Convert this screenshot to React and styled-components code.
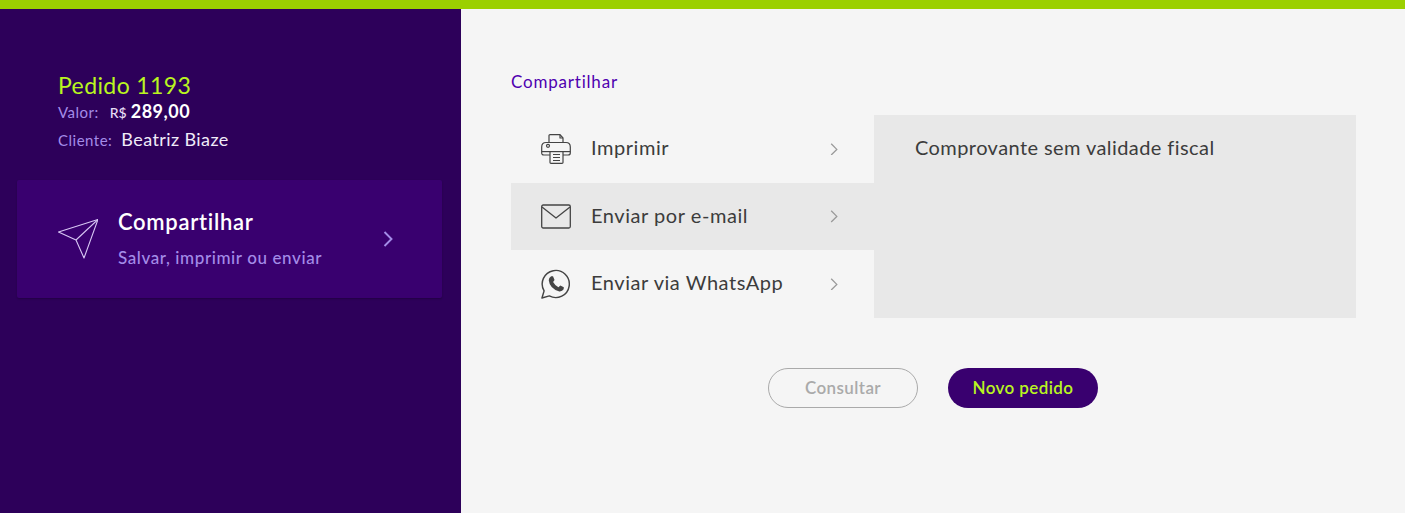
import React from 'react';
import styled, { createGlobalStyle } from 'styled-components';

const GlobalStyle = createGlobalStyle`
  html, body {
    margin: 0;
    height: 100%;
    background: #f5f5f5;
  }
  body {
    font-family: 'Lato', 'Open Sans', sans-serif;
  }
  * {
    box-sizing: border-box;
  }
`;

const Page = styled.div`
  width: 100%;
  height: 513px;
  overflow: hidden;
  display: flex;
  flex-direction: column;
`;

const TopBar = styled.div`
  flex: 0 0 9px;
  background: #9bd000;
`;

const Body = styled.div`
  flex: 1;
  display: flex;
`;

const Sidebar = styled.aside`
  flex: 0 0 461px;
  background: #2d005a;
  padding: 62px 19px 0 17px;
`;

const Summary = styled.div`
  padding-left: 41px;
  margin-bottom: 25px;
`;

const OrderTitle = styled.h1`
  margin: 0;
  font-size: 23px;
  line-height: 28px;
  font-weight: 400;
  letter-spacing: 0.4px;
  color: #baf51f;
`;

const SummaryRow = styled.div`
  display: flex;
  align-items: baseline;
  height: ${p => p.$height}px;
  line-height: ${p => p.$height}px;
`;

const SummaryLabel = styled.span`
  font-size: 15px;
  letter-spacing: 0.5px;
  color: #a48ce8;
  margin-right: ${p => p.$gap}px;
`;

const Currency = styled.span`
  font-size: 14px;
  font-weight: 500;
  color: #e6dcf5;
  margin-right: 4px;
`;

const Amount = styled.strong`
  font-size: 18px;
  font-weight: 700;
  letter-spacing: 0.5px;
  color: #ffffff;
`;

const ClientName = styled.span`
  font-size: 18px;
  letter-spacing: 0.4px;
  color: #f0ebf8;
`;

const ShareCard = styled.div`
  height: 118px;
  background: #39006f;
  border-radius: 2px;
  box-shadow: 0 1px 2px rgba(0, 0, 0, 0.25);
  display: flex;
  align-items: center;
  padding: 0 49px 0 41px;
`;

const ShareText = styled.div`
  flex: 1;
  margin-left: 20px;
  margin-top: -2px;
`;

const ShareTitle = styled.div`
  font-size: 22px;
  line-height: 28px;
  font-weight: 600;
  letter-spacing: 0.7px;
  color: #ffffff;
`;

const ShareSubtitle = styled.div`
  margin-top: 11px;
  font-size: 17px;
  line-height: 22px;
  font-weight: 500;
  letter-spacing: 0.6px;
  color: #a48ce8;
`;

const Main = styled.main`
  flex: 1;
  padding: 62px 49px 0 50px;
`;

const SectionTitle = styled.h2`
  margin: 0 0 23px;
  font-size: 17px;
  line-height: 21px;
  font-weight: 400;
  letter-spacing: 0.8px;
  color: #4f00b0;
`;

const Panels = styled.div`
  display: flex;
  height: 203px;
`;

const OptionList = styled.div`
  flex: 0 0 363px;
  display: flex;
  flex-direction: column;
`;

const Option = styled.div`
  height: ${p => p.$height}px;
  display: flex;
  align-items: center;
  padding: 0 36px 0 30px;
  background: ${p => (p.$active ? '#e8e8e8' : 'transparent')};
`;

const OptionIcon = styled.span`
  flex: 0 0 30px;
  height: 32px;
  display: flex;
  align-items: center;
  justify-content: center;
  margin-right: 20px;
`;

const OptionLabel = styled.span`
  flex: 1;
  font-size: 20px;
  line-height: 24px;
  margin-top: -4px;
  letter-spacing: 0.55px;
  color: #3c3c3c;
`;

const Detail = styled.div`
  flex: 1;
  background: #e8e8e8;
  padding: 19px 41px;
  font-size: 20px;
  line-height: 26px;
  letter-spacing: 0.42px;
  color: #3c3c3c;
`;

const Actions = styled.div`
  margin-top: 50px;
  padding-right: 1px;
  display: flex;
  justify-content: center;
  gap: 30px;
`;

const Button = styled.button`
  width: 150px;
  height: 40px;
  border-radius: 20px;
  font-family: inherit;
  font-size: 17px;
  font-weight: 600;
  letter-spacing: 0.4px;
  padding: 0 0 2px;
  background: ${p => (p.$primary ? '#39006f' : 'transparent')};
  color: ${p => (p.$primary ? '#baf51f' : '#aaaaaa')};
  border: ${p => (p.$primary ? '0' : '1px solid #aaaaaa')};
`;

const PlaneIcon = () => (
  <svg width="40" height="40" viewBox="0 0 40 40" fill="none" stroke="#d9c8f5" strokeWidth="1.1" strokeLinejoin="round">
    <path d="M40 0.5 L0.5 13 L18 21 L26 39 Z" />
    <path d="M40 0.5 L18 21" />
  </svg>
);

const Chevron = ({ color, size, weight = 1.6 }) => (
  <svg width={size} height={size * 1.6} viewBox="0 0 10 16" fill="none" stroke={color} strokeWidth={weight}>
    <path d="M1.5 1 L8.5 8 L1.5 15" />
  </svg>
);

const PrinterIcon = () => (
  <svg width="30" height="30" viewBox="0 0 30 30" fill="none" stroke="#444444" strokeWidth="1.2" strokeLinejoin="round">
    <path d="M8 8.5 V1.5 Q8 0.7 9 0.7 H19 L22 4 V8.5" />
    <path d="M19 0.7 V4 H22" />
    <path d="M9 21 H3 Q0.7 21 0.7 19 V13 Q0.7 8.5 5 8.5 H25 Q29.3 8.5 29.3 13 V19 Q29.3 21 27 21 H22" />
    <path d="M0.7 17.6 H29.3" />
    <circle cx="7" cy="11.8" r="1.5" />
    <path d="M9 17.6 V28.5 Q9 29.3 10 29.3 H21 Q22 29.3 22 28.5 V17.6" />
    <path d="M12 20.5 H19 M12 23.5 H19 M12 26.5 H19" />
  </svg>
);

const MailIcon = () => (
  <svg width="30" height="25" viewBox="0 0 30 25" fill="none" stroke="#444444" strokeWidth="1.3" strokeLinejoin="round">
    <rect x="0.7" y="1" width="28.6" height="23" rx="1.5" />
    <path d="M1 3 L15 14 L29 3" />
  </svg>
);

const WhatsappIcon = () => (
  <svg width="30" height="30" viewBox="0 0 31 31" fill="none">
    <path
      d="M1 30 L3.2 22.6 A14 14 0 1 1 8.6 27.8 Z"
      stroke="#444444"
      strokeWidth="1.5"
      strokeLinejoin="round"
    />
    <path
      d="M10.5 7.6 L12.4 7.6 L14 11.4 L12.5 13.4 Q14.4 17 18 18.8 L20 17 L23.6 18.8 L23.4 21 Q22 23.4 19 23.2 Q9 20.4 8 11.6 Q8 9 10.5 7.6 Z"
      fill="#444444"
    />
  </svg>
);

const options = [
  { label: 'Imprimir', icon: <PrinterIcon />, height: 68 },
  { label: 'Enviar por e-mail', icon: <MailIcon />, height: 67, active: true },
  { label: 'Enviar via WhatsApp', icon: <WhatsappIcon />, height: 68 },
];

export default function App() {
  return (
    <Page>
      <GlobalStyle />
      <TopBar />
      <Body>
        <Sidebar>
          <Summary>
            <OrderTitle>Pedido 1193</OrderTitle>
            <SummaryRow $height={24}>
              <SummaryLabel $gap={11}>Valor:</SummaryLabel>
              <Currency>R$</Currency>
              <Amount>289,00</Amount>
            </SummaryRow>
            <SummaryRow $height={32}>
              <SummaryLabel $gap={9}>Cliente:</SummaryLabel>
              <ClientName>Beatriz Biaze</ClientName>
            </SummaryRow>
          </Summary>
          <ShareCard>
            <PlaneIcon />
            <ShareText>
              <ShareTitle>Compartilhar</ShareTitle>
              <ShareSubtitle>Salvar, imprimir ou enviar</ShareSubtitle>
            </ShareText>
            <Chevron color="#a48ce8" size={10} weight={1.9} />
          </ShareCard>
        </Sidebar>
        <Main>
          <SectionTitle>Compartilhar</SectionTitle>
          <Panels>
            <OptionList>
              {options.map(option => (
                <Option key={option.label} $height={option.height} $active={option.active}>
                  <OptionIcon>{option.icon}</OptionIcon>
                  <OptionLabel>{option.label}</OptionLabel>
                  <Chevron color="#999999" size={8} />
                </Option>
              ))}
            </OptionList>
            <Detail>Comprovante sem validade fiscal</Detail>
          </Panels>
          <Actions>
            <Button>Consultar</Button>
            <Button $primary>Novo pedido</Button>
          </Actions>
        </Main>
      </Body>
    </Page>
  );
}
